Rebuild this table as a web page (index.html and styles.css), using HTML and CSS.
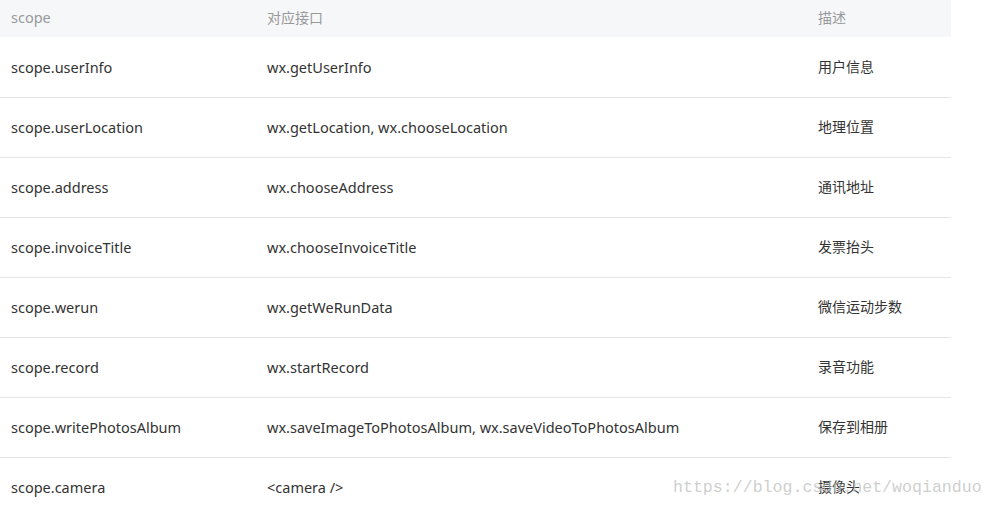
FILE: index.html
```html
<!DOCTYPE html>
<html lang="zh">
<head>
<meta charset="utf-8">
<link rel="stylesheet" href="styles.css">
</head>
<body>
<div class="page">
  <table class="scope-table">
    <thead>
      <tr><th class="c1">scope</th><th class="c2 zh">对应接口</th><th class="c3 zh">描述</th></tr>
    </thead>
    <tbody>
      <tr><td>scope.userInfo</td><td>wx.getUserInfo</td><td class="zh">用户信息</td></tr>
      <tr><td>scope.userLocation</td><td>wx.getLocation, wx.chooseLocation</td><td class="zh">地理位置</td></tr>
      <tr><td>scope.address</td><td>wx.chooseAddress</td><td class="zh">通讯地址</td></tr>
      <tr><td>scope.invoiceTitle</td><td>wx.chooseInvoiceTitle</td><td class="zh">发票抬头</td></tr>
      <tr><td>scope.werun</td><td>wx.getWeRunData</td><td class="zh">微信运动步数</td></tr>
      <tr><td>scope.record</td><td>wx.startRecord</td><td class="zh">录音功能</td></tr>
      <tr><td>scope.writePhotosAlbum</td><td>wx.saveImageToPhotosAlbum, wx.saveVideoToPhotosAlbum</td><td class="zh">保存到相册</td></tr>
      <tr><td>scope.camera</td><td>&lt;camera /&gt;</td><td class="zh">摄像头</td></tr>
    </tbody>
  </table>
  <div class="watermark">https://blog.csdn.net/woqianduo</div>
</div>
</body>
</html>
```

FILE: styles.css
```css
html, body {
  margin: 0;
  padding: 0;
  background: #fff;
}
.page {
  position: relative;
  width: 994px;
  height: 508px;
  overflow: hidden;
}
.scope-table {
  width: 951px;
  border-collapse: collapse;
  font-family: "Noto Sans", "Noto Sans CJK SC", sans-serif;
  font-size: 14.5px;
  color: #333;
  table-layout: fixed;
}
.scope-table th {
  height: 34px;
  padding: 0 0 3px 11px;
  background: #f6f7f9;
  border-bottom: 1px solid #fff;
  color: #999;
  font-weight: normal;
  text-align: left;
}
.c1 { width: 245px; }
.c2 { width: 540px; }
.scope-table td {
  height: 57px;
  padding: 0 0 2px 11px;
  border-bottom: 1px solid #e5e5e5;
  white-space: nowrap;
}
.scope-table .zh {
  font-family: "Noto Sans CJK SC", sans-serif;
  font-size: 14px;
}
.scope-table td.zh {
  padding-bottom: 4px;
  height: 55px;
}
.scope-table th.zh {
  padding-bottom: 4px;
  height: 33px;
}
.watermark {
  position: absolute;
  left: 673px;
  top: 478px;
  font-family: "Liberation Mono", monospace;
  font-size: 16.6px;
  color: rgba(190, 190, 190, 0.75);
  pointer-events: none;
}
```
